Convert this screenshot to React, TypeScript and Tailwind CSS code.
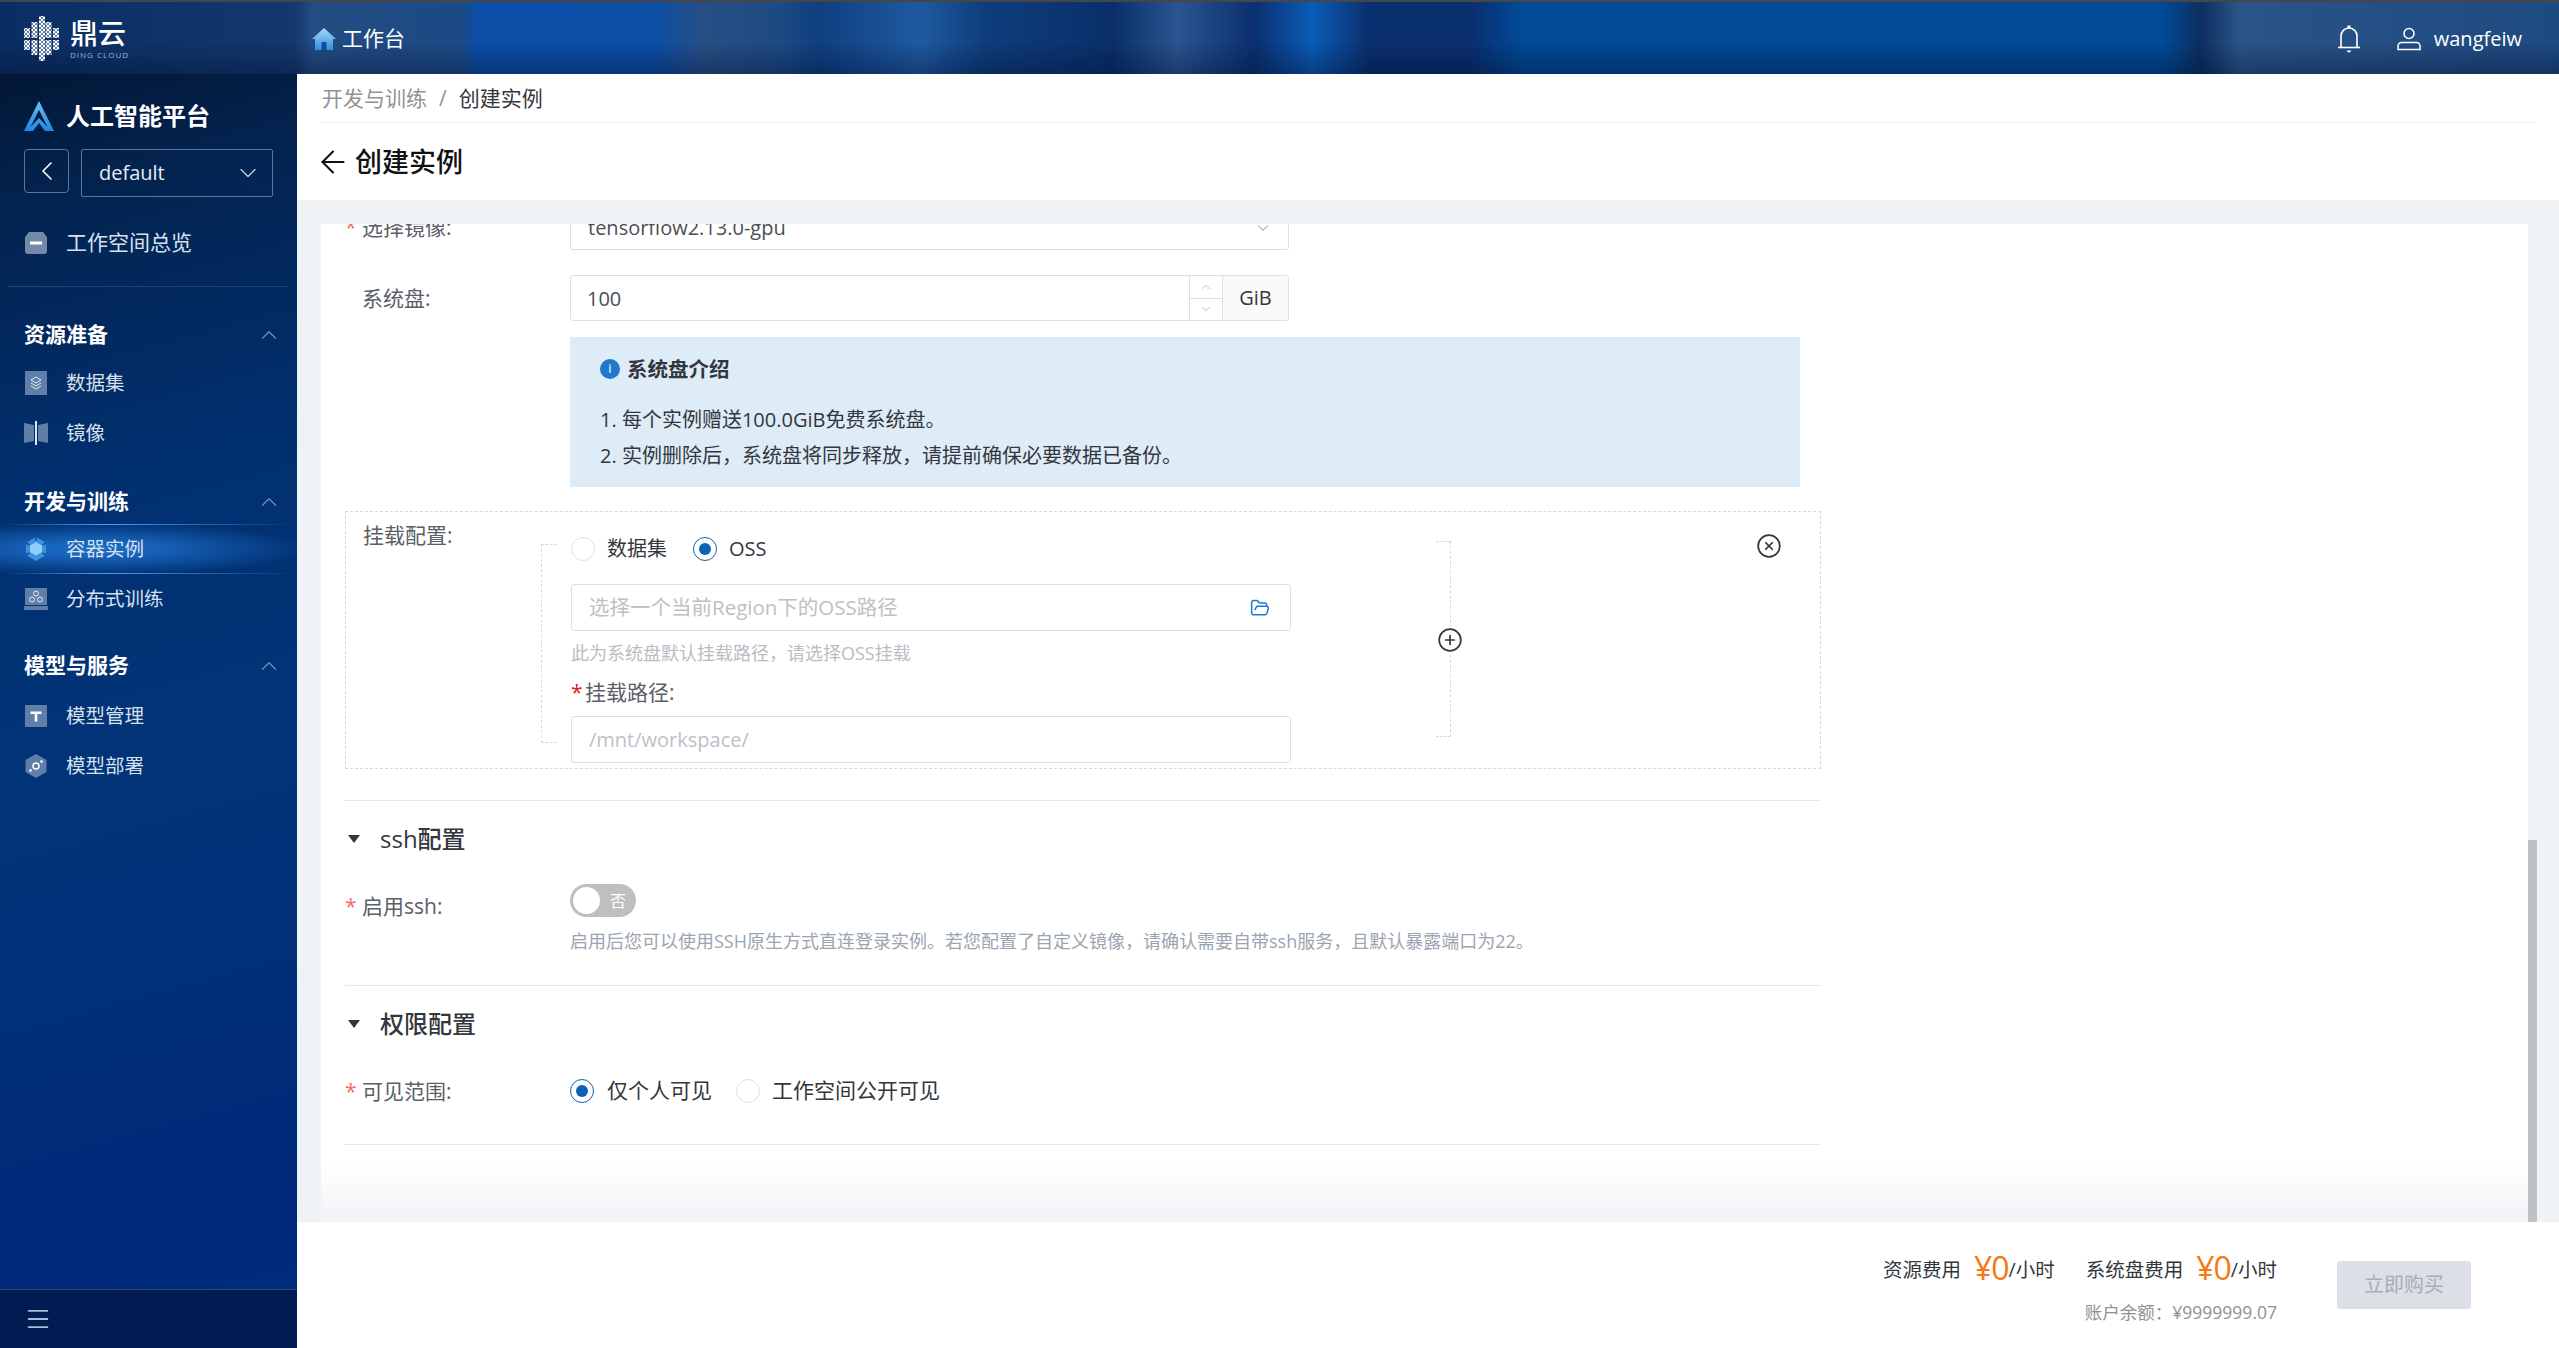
import { ArrowLeft, ChevronDown, ChevronLeft, ChevronUp, CirclePlus, CircleX, FolderOpen, Menu } from 'lucide-react';
import type { ReactNode } from 'react';

const font = "font-['Open_Sans','Noto_Sans_CJK_SC',sans-serif]";

function BrandLogo() {
  const cols = [
    { x: 0, y: 12, h: 10 },
    { x: 0, y: 24, h: 10 },
    { x: 29, y: 12, h: 10 },
    { x: 29, y: 24, h: 10 },
    { x: 7.500, y: 6, h: 16 },
    { x: 7.500, y: 24, h: 15 },
    { x: 21.500, y: 6, h: 16 },
    { x: 21.500, y: 24, h: 15 },
    { x: 15, y: 0, h: 45 },
  ];
  return (
    <svg width="35" height="45" viewBox="0 0 35 45">
      <defs>
        <pattern id="hatch" width="4" height="4" patternUnits="userSpaceOnUse">
          <rect width="4" height="4" fill="#fff" />
          <path d="M0 0L4 4M4 0L0 4" stroke="#24497f" strokeWidth="0.7" />
        </pattern>
      </defs>
      {cols.map((c, i) => (
        <rect key={i} x={c.x} y={c.y} width="6" height={c.h} fill="url(#hatch)" />
      ))}
    </svg>
  );
}

function HomeIcon() {
  return (
    <svg width="24" height="22" viewBox="0 0 24 22">
      <defs>
        <linearGradient id="home" x1="0" y1="0" x2="0" y2="1">
          <stop offset="0" stopColor="#a9d8f7" />
          <stop offset="1" stopColor="#2f8fe0" />
        </linearGradient>
      </defs>
      <path d="M12 0L24 11H21V22H3V11H0Z" fill="url(#home)" />
      <rect x="9.500" y="14" width="5" height="8" fill="#0d4e9e" />
    </svg>
  );
}

function PlatformLogo() {
  return (
    <svg width="30" height="30" viewBox="0 0 30 30">
      <defs>
        <linearGradient id="plat" x1="0" y1="0" x2="0" y2="1">
          <stop offset="0" stopColor="#6fc0f2" />
          <stop offset="1" stopColor="#1f86e6" />
        </linearGradient>
      </defs>
      <path
        d="M15 0L30 30H21L15 22L9 30H0ZM15 9L6.500 26L15 17L23.500 26Z"
        fill="url(#plat)"
        fillRule="evenodd"
      />
    </svg>
  );
}

const navFill = '#5f7ea8';

function OverviewIcon() {
  return (
    <svg width="22" height="22" viewBox="0 0 22 22">
      <path d="M4 0H18L22 5V19a3 3 0 0 1-3 3H3a3 3 0 0 1-3-3V5Z" fill="#7389a8" />
      <rect x="5" y="9.500" width="12" height="3" fill="#fff" />
    </svg>
  );
}

function DatasetIcon() {
  return (
    <svg width="22" height="24" viewBox="0 0 22 24">
      <rect width="22" height="24" fill={navFill} />
      <path d="M11 6L16 9L11 12L6 9Z M6 12L11 15L16 12 M6 15L11 18L16 15" fill="none" stroke="#dfe8f2" strokeWidth="1" />
    </svg>
  );
}

function MirrorIcon() {
  return (
    <svg width="24" height="24" viewBox="0 0 24 24">
      <path d="M0 2L10 4V20L0 22Z" fill={navFill} />
      <path d="M24 2L14 4V20L24 22Z" fill={navFill} />
      <rect x="11" y="0" width="2" height="24" fill="#dfe8f2" />
    </svg>
  );
}

function ContainerIcon() {
  return (
    <svg width="22" height="24" viewBox="0 0 22 24">
      <path d="M11 0L21 6V18L11 24L1 18V6Z" fill="#3c93dd" />
      <path d="M11 5L17 8.500V15L11 18.500L5 15V8.500Z" fill="#8fd0fa" />
      <path d="M11 0V4M1 6L4.500 8M21 6L17.500 8M1 18L4.500 16M21 18L17.500 16" stroke="#0f4f9e" strokeWidth="1.500" />
    </svg>
  );
}

function DistributedIcon() {
  return (
    <svg width="24" height="22" viewBox="0 0 24 22">
      <rect x="1" y="0" width="22" height="17" fill={navFill} />
      <rect x="0" y="18" width="24" height="4" fill={navFill} />
      <g fill="none" stroke="#e3eaf3" strokeWidth="1">
        <circle cx="12" cy="5.500" r="2.500" />
        <circle cx="8" cy="11.500" r="2.500" />
        <circle cx="16" cy="11.500" r="2.500" />
      </g>
    </svg>
  );
}

function ModelIcon() {
  return (
    <svg width="22" height="22" viewBox="0 0 22 22">
      <rect width="22" height="22" fill={navFill} />
      <path d="M5.500 6.500H16.500V9H12.300V16.500H9.700V9H5.500Z" fill="#fff" />
    </svg>
  );
}

function DeployIcon() {
  return (
    <svg width="22" height="24" viewBox="0 0 22 24">
      <path d="M11 0L21.500 6V18L11 24L0.500 18V6Z" fill={navFill} />
      <circle cx="11" cy="12" r="3" fill="none" stroke="#fff" strokeWidth="1.500" />
      <circle cx="16.500" cy="7.500" r="1.300" fill="#fff" />
      <circle cx="5.500" cy="16.500" r="1.300" fill="#fff" />
    </svg>
  );
}

function BellIcon() {
  return (
    <svg width="24" height="28" viewBox="0 0 24 28" fill="none" stroke="#fff" strokeWidth="1.600">
      <path d="M4 22V11a8 8 0 0 1 16 0V22" />
      <path d="M1 22.500H23" />
      <circle cx="12" cy="2" r="1" fill="#fff" />
      <path d="M10 25.500a2 2 0 0 0 4 0Z" fill="#fff" stroke="none" />
    </svg>
  );
}

function UserIcon() {
  return (
    <svg width="24" height="24" viewBox="0 0 24 24" fill="none" stroke="#fff" strokeWidth="1.500">
      <circle cx="12" cy="6.500" r="5" />
      <path d="M1 22.500V19a3.500 3.500 0 0 1 3.500-3.500H19.500A3.500 3.500 0 0 1 23 19V22.500Z" />
    </svg>
  );
}

function NavItem({ icon, label }: { icon: ReactNode; label: string }) {
  return (
    <div className="flex h-[50px] items-center pl-[24px]">
      <span className="flex w-[24px] items-center justify-center">{icon}</span>
      <span className="ml-[18px] text-[19.500px] text-[#d7e1ee]">{label}</span>
    </div>
  );
}

function NavHead({ label, className }: { label: string; className: string }) {
  return (
    <div className={`flex h-[40px] items-center justify-between pl-[24px] pr-[15px] ${className}`}>
      <span className="text-[21px] font-bold text-white">{label}</span>
      <ChevronUp size={26} strokeWidth={1.2} className="text-[#6f8db5]" />
    </div>
  );
}

function Sidebar() {
  return (
    <aside className="flex w-[297px] shrink-0 flex-col bg-[linear-gradient(165deg,#031735_0%,#03234f_10%,#013070_32%,#013478_55%,#00287a_90%,#00307c_100%)]">
      <div className="flex-1">
        <div className="mt-[26px] flex h-[32px] items-center pl-[24px]">
          <PlatformLogo />
          <span className="ml-[12px] text-[24px] font-bold text-white">人工智能平台</span>
        </div>
        <div className="mt-[17px] flex items-start pl-[24px]">
          <div className="flex h-[44px] w-[45px] items-center justify-center rounded-[4px] border border-[#5a7699]">
            <ChevronLeft size={32} strokeWidth={1.2} className="text-white" />
          </div>
          <div className="ml-[12px] flex h-[48px] w-[192px] items-center justify-between rounded-[2px] border border-[#5a7699] pl-[17px] pr-[10px]">
            <span className="text-[20px] text-[#e6edf5]">default</span>
            <ChevronDown size={28} strokeWidth={1.1} className="text-[#c7d4e4]" />
          </div>
        </div>
        <div className="mt-[21px] flex h-[50px] items-center pl-[24px]">
          <span className="flex w-[24px] items-center justify-center">
            <OverviewIcon />
          </span>
          <span className="ml-[18px] text-[21px] text-[#d7e1ee]">工作空间总览</span>
        </div>
        <div className="mx-[8px] mt-[18px] h-px bg-[#1f4478]" />
        <NavHead label="资源准备" className="mt-[28px]" />
        <div className="mt-[3px]">
          <NavItem icon={<DatasetIcon />} label="数据集" />
          <NavItem icon={<MirrorIcon />} label="镜像" />
        </div>
        <NavHead label="开发与训练" className="mt-[24px]" />
        <div className="mt-[2px]">
          <div className="bg-[radial-gradient(ellipse_at_32%_50%,#1a6fcb_0%,#165fb5_25%,rgba(26,111,203,0)_75%)]">
            <div className="h-px bg-[linear-gradient(90deg,transparent,#4f9fec_35%,transparent)]" />
            <div className="flex h-[48px] items-center pl-[24px]">
              <span className="flex w-[24px] items-center justify-center">
                <ContainerIcon />
              </span>
              <span className="ml-[18px] text-[19.500px] text-[#d7e1ee]">容器实例</span>
            </div>
            <div className="h-px bg-[linear-gradient(90deg,transparent,#4f9fec_35%,transparent)]" />
          </div>
          <NavItem icon={<DistributedIcon />} label="分布式训练" />
        </div>
        <NavHead label="模型与服务" className="mt-[22px]" />
        <div className="mt-[5px]">
          <NavItem icon={<ModelIcon />} label="模型管理" />
          <NavItem icon={<DeployIcon />} label="模型部署" />
        </div>
      </div>
      <div className="flex h-[59px] items-center border-t border-[#28487c] bg-[#011c52] pl-[24px]">
        <Menu size={28} strokeWidth={1.6} className="text-[#a9bcd8]" />
      </div>
    </aside>
  );
}

function Radio({ checked }: { checked?: boolean }) {
  return (
    <span
      className={`flex h-[24px] w-[24px] items-center justify-center rounded-full border bg-white ${
        checked ? 'border-[#0b62b8]' : 'border-[#dcdfe6]'
      }`}
    >
      {checked && <span className="h-[12px] w-[12px] rounded-full bg-[#0b62b8]" />}
    </span>
  );
}

function FieldLabel({ required, text }: { required?: boolean; text: string }) {
  return (
    <div className="flex w-[225px] shrink-0 items-center pt-[2px] text-[21px] text-[#5b6068]">
      <span className="w-[17px] text-[#f56c6c]">{required ? '*' : ''}</span>
      {text}
    </div>
  );
}

function SectionHead({ text }: { text: string }) {
  return (
    <div className="flex h-[76px] items-center">
      <span className="ml-[3px] h-0 w-0 border-x-[6px] border-t-[8px] border-x-transparent border-t-[#33373d]" />
      <span className="ml-[20px] text-[24px] font-medium text-[#33373d]">{text}</span>
    </div>
  );
}

function MountConfig() {
  return (
    <div className="relative mt-[24px] flex h-[258px] w-[1476px] items-start border border-dashed border-[#dadada]">
      <div className="w-[195px] shrink-0 pl-[17px] pt-[8px] text-[21px] text-[#5b6068]">挂载配置:</div>
      <div className="mt-[32px] h-[199px] w-[16px] shrink-0 border-y border-l border-dashed border-[#dadada]" />
      <div className="ml-[14px] w-[720px] shrink-0 pt-[25px]">
        <div className="flex h-[24px] items-center text-[20px] text-[#33373d]">
          <Radio />
          <span className="ml-[12px]">数据集</span>
          <span className="ml-[26px]">
            <Radio checked />
          </span>
          <span className="ml-[12px]">OSS</span>
        </div>
        <div className="mt-[23px] flex h-[47px] items-center justify-between rounded-[3px] border border-[#dcdfe6] pl-[17px] pr-[20px]">
          <span className="text-[20.500px] text-[#bcc0c7]">选择一个当前Region下的OSS路径</span>
          <FolderOpen size={20} strokeWidth={1.8} className="text-[#1f78d1]" />
        </div>
        <div className="mt-[10px] flex h-[24px] items-center text-[18px] text-[#b9bcc2]">
          此为系统盘默认挂载路径，请选择OSS挂载
        </div>
        <div className="mt-[14px] flex h-[28px] items-center text-[21px] text-[#5b6068]">
          <span className="w-[14px] text-[#e02020]">*</span>挂载路径:
        </div>
        <div className="mt-[9px] flex h-[47px] items-center rounded-[3px] border border-[#dcdfe6] pl-[17px] text-[20px] text-[#bcc0c7]">
          /mnt/workspace/
        </div>
      </div>
      <div className="relative ml-[145px] mt-[29px] h-[196px] w-[15px] shrink-0 border-y border-r border-dashed border-[#dadada]">
        <CirclePlus
          size={26}
          strokeWidth={1.6}
          className="absolute right-[-13px] top-[85px] rounded-full bg-white text-[#33373d]"
        />
      </div>
      <CircleX size={26} strokeWidth={1.6} className="absolute left-[1410px] top-[21px] text-[#33373d]" />
    </div>
  );
}

function FormCard() {
  return (
    <div className="relative h-full w-[2207px] overflow-hidden bg-white pl-[24px]">
      <div className="-mt-[20px] flex h-[46px] items-center">
        <FieldLabel required text="选择镜像:" />
        <div className="flex h-[46px] w-[719px] items-center justify-between rounded-[3px] border border-[#dcdfe6] pl-[17px] pr-[16px] pt-[2px] text-[20px] text-[#4a4e55]">
          tensorflow2.13.0-gpu
          <ChevronDown size={18} strokeWidth={1.5} className="text-[#b4b8bf]" />
        </div>
      </div>
      <div className="mt-[25px] flex h-[46px] items-center">
        <FieldLabel text="系统盘:" />
        <div className="flex h-[46px] w-[719px] rounded-[3px] border border-[#dcdfe6] text-[20px] text-[#4a4e55]">
          <div className="flex flex-1 items-center pl-[16px] pt-[1px]">100</div>
          <div className="flex w-[33px] flex-col border-l border-[#dcdfe6] text-[#a4a8af]">
            <div className="flex flex-1 items-center justify-center border-b border-[#dcdfe6]">
              <ChevronUp size={14} strokeWidth={1.2} />
            </div>
            <div className="flex flex-1 items-center justify-center">
              <ChevronDown size={14} strokeWidth={1.2} />
            </div>
          </div>
          <div className="flex w-[66px] items-center justify-center border-l border-[#dcdfe6] bg-[#fafafa] text-[#33373d]">
            GiB
          </div>
        </div>
      </div>
      <div className="ml-[225px] mt-[16px] h-[150px] w-[1230px] bg-[#deecf8] pl-[30px] pt-[19px] text-[20px] text-[#33373d]">
        <div className="flex h-[26px] items-center text-[20.500px] font-bold">
          <span className="mr-[7px] flex h-[20px] w-[20px] items-center justify-center rounded-full bg-[#1f78c8] text-[13px] font-normal text-white">
            i
          </span>
          系统盘介绍
        </div>
        <div className="mt-[20px] leading-[36px]">
          <p>1. 每个实例赠送100.0GiB免费系统盘。</p>
          <p>2. 实例删除后，系统盘将同步释放，请提前确保必要数据已备份。</p>
        </div>
      </div>
      <MountConfig />
      <div className="w-[1476px]">
        <div className="mt-[31px] h-px bg-[#e4e7ed]" />
        <SectionHead text="ssh配置" />
        <div className="mt-[7px] flex items-start">
          <div className="mt-[8px] flex h-[28px] items-center">
            <FieldLabel required text="启用ssh:" />
          </div>
          <div className="flex h-[33px] w-[66px] items-center justify-between rounded-full bg-[#bfbfbf] pl-[3px] pr-[10px]">
            <span className="h-[27px] w-[27px] rounded-full bg-white" />
            <span className="text-[16px] text-white">否</span>
          </div>
        </div>
        <div className="ml-[225px] mt-[9px] flex h-[24px] items-center whitespace-nowrap text-[18px] text-[#9aa5b1]">
          启用后您可以使用SSH原生方式直连登录实例。若您配置了自定义镜像，请确认需要自带ssh服务，且默认暴露端口为22。
        </div>
        <div className="mt-[32px] h-px bg-[#e4e7ed]" />
        <SectionHead text="权限配置" />
        <div className="mt-[17px] flex h-[24px] items-center">
          <FieldLabel required text="可见范围:" />
          <Radio checked />
          <span className="ml-[13px] text-[21px] text-[#33373d]">仅个人可见</span>
          <span className="ml-[24px]">
            <Radio />
          </span>
          <span className="ml-[12px] text-[21px] text-[#33373d]">工作空间公开可见</span>
        </div>
        <div className="mt-[41px] h-px bg-[#e4e7ed]" />
      </div>
      <div className="absolute inset-x-0 bottom-0 h-[60px] bg-[linear-gradient(180deg,rgba(240,243,246,0),#f1f3f6)]" />
    </div>
  );
}

function Footer() {
  return (
    <div className="flex h-[126px] items-start justify-end bg-white pr-[88px] pt-[39px]">
      <div className="-mt-[13px] flex flex-col items-end">
        <div className="flex h-[44px] items-center whitespace-nowrap text-[19.500px] text-[#33373d]">
          <span>资源费用</span>
          <span className="mb-[4px] ml-[13px] text-[32px] leading-none tracking-[-1px] text-[#f57a14]">¥0</span>
          <span>/小时</span>
          <span className="ml-[31px]">系统盘费用</span>
          <span className="mb-[4px] ml-[13px] text-[32px] leading-none tracking-[-1px] text-[#f57a14]">¥0</span>
          <span>/小时</span>
        </div>
        <div className="mt-[7px] text-[17.500px] leading-[26px] text-[#8e9196]">账户余额：¥9999999.07</div>
      </div>
      <div className="ml-[60px] flex h-[48px] w-[134px] items-center justify-center rounded-[3px] bg-[#dcdfe6] text-[20px] text-[#a9acb3]">
        立即购买
      </div>
    </div>
  );
}

export default function App() {
  return (
    <div className={`flex h-screen flex-col overflow-hidden ${font}`}>
      <header className="relative flex h-[74px] shrink-0 items-center border-t-2 border-[#44474a] bg-[linear-gradient(90deg,#0a2e63_0%,#12386e_11.500%,#244c82_12.200%,#1c4a85_18%,#0a4ea8_18.700%,#0a4ea5_25.500%,#284f85_27.500%,#1d4a82_30.500%,#0f3f80_32%,#1f5aa0_36%,#0e3d7c_38.500%,#0a2f6a_43.500%,#2a5590_46%,#0b2f70_49%,#0a5cb5_51.300%,#0a2f6e_53.500%,#0a2f6e_57.500%,#004a98_59.500%,#004a98_84.500%,#0d2f60_86%,#2b5488_87.500%,#1d4a80_100%)]">
        <div className="absolute inset-0 bg-[linear-gradient(180deg,rgba(0,10,40,0)_55%,rgba(0,10,40,0.35)_100%)]" />
        <div className="relative flex w-full items-center pl-[24px] pr-[37px]">
          <BrandLogo />
          <div className="ml-[11px] flex flex-col">
            <span className="text-[28px] font-medium leading-[32px] text-white">鼎云</span>
            <span className="mt-[1px] text-[8px] leading-[10px] tracking-[1px] text-[#a3b6ce]">DING CLOUD</span>
          </div>
          <div className="ml-[183px] flex items-center pt-[2px]">
            <HomeIcon />
            <span className="ml-[6px] text-[21px] text-white">工作台</span>
          </div>
          <div className="ml-auto flex items-center pt-[2px]">
            <BellIcon />
            <span className="ml-[36px]">
              <UserIcon />
            </span>
            <span className="ml-[13px] text-[20px] text-white">wangfeiw</span>
          </div>
        </div>
      </header>
      <div className="flex min-h-0 flex-1">
        <Sidebar />
        <main className="flex min-w-0 flex-1 flex-col">
          <div className="h-[126px] shrink-0 bg-white px-[23px]">
            <div className="flex h-[49px] items-center border-b border-[#eceef1] pl-[2px] pt-[2px] text-[21px]">
              <span className="text-[#8f9297]">开发与训练</span>
              <span className="mx-[12px] text-[#8f9297]">/</span>
              <span className="text-[#33373d]">创建实例</span>
            </div>
            <div className="flex h-[78px] items-center text-[27px] font-medium text-[#111]">
              <ArrowLeft size={36} strokeWidth={1.4} className="-ml-[5px]" />
              <span className="ml-[4px]">创建实例</span>
            </div>
          </div>
          <div className="relative min-h-0 flex-1 bg-[#f0f3f6] pl-[24px] pt-[24px]">
            <FormCard />
            <div className="absolute bottom-0 left-[2231px] top-[640px] w-[9px] bg-[#bfc2c5]" />
          </div>
          <Footer />
        </main>
      </div>
    </div>
  );
}
